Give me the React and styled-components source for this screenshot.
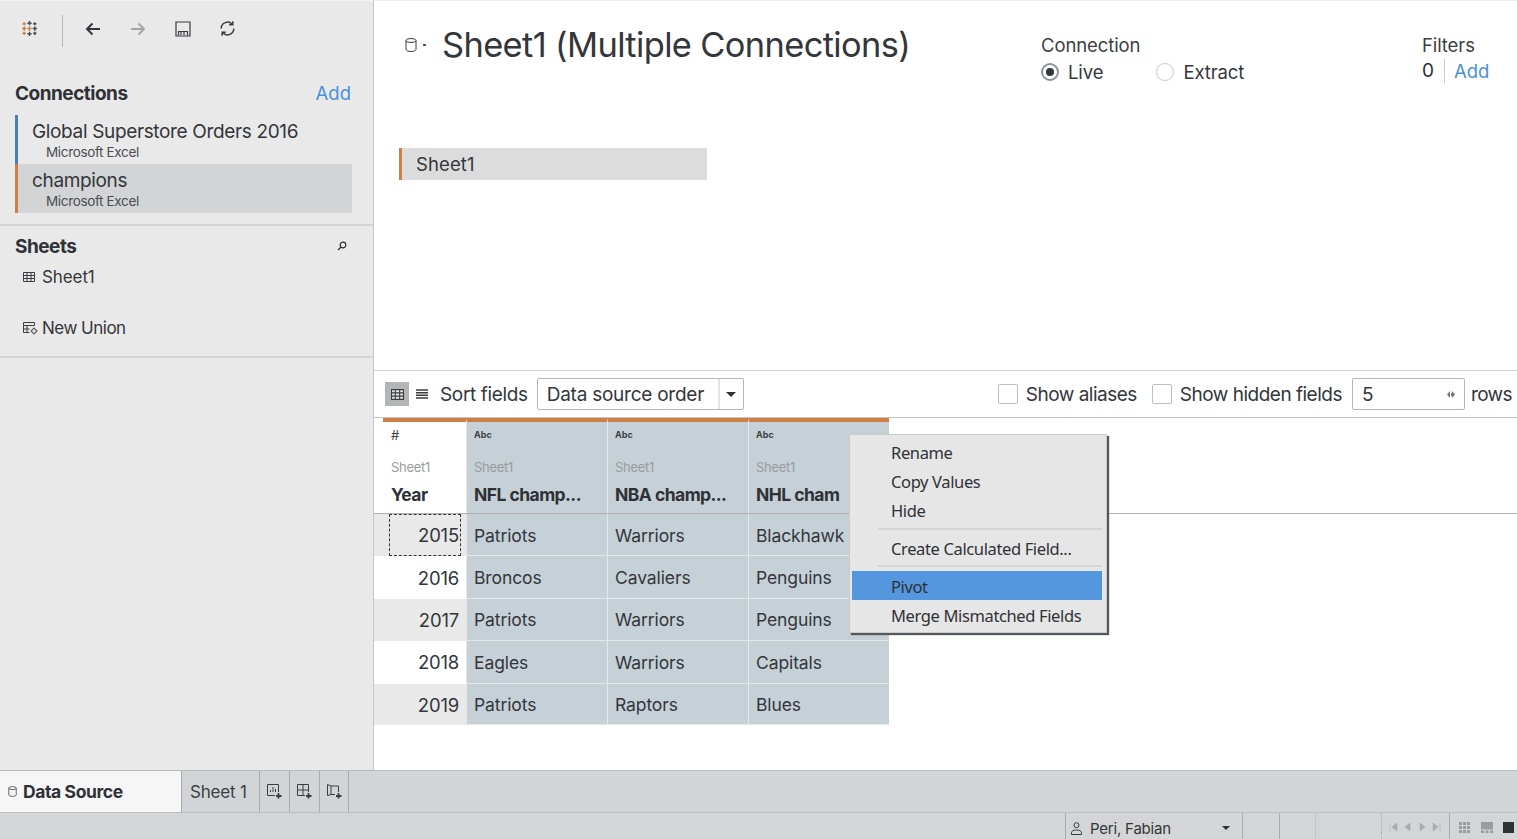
import styled, { createGlobalStyle } from 'styled-components';

const GlobalStyle = createGlobalStyle`
  html, body {
    margin: 0;
    padding: 0;
    background: #fff;
    overflow: hidden;
  }
  * {
    box-sizing: border-box;
  }
  body {
    font-family: 'Inter', 'Liberation Sans', sans-serif;
    color: #2f3136;
  }
`;

const ROWS = [
  ['2015', 'Patriots', 'Warriors', 'Blackhawk'],
  ['2016', 'Broncos', 'Cavaliers', 'Penguins'],
  ['2017', 'Patriots', 'Warriors', 'Penguins'],
  ['2018', 'Eagles', 'Warriors', 'Capitals'],
  ['2019', 'Patriots', 'Raptors', 'Blues'],
];

const COLUMNS = [
  { type: 'Abc', name: 'NFL champ...' },
  { type: 'Abc', name: 'NBA champ...' },
  { type: 'Abc', name: 'NHL cham' },
];

function LogoIcon() {
  const dark = '#4a4f57';
  const orange = '#cf7f45';
  return (
    <svg width="17" height="17" viewBox="0 0 16 16" fill="none" strokeWidth="1.4">
      <path d="M8 1v4M6 3h4" stroke={dark} />
      <path d="M8 11v4M6 13h4" stroke={dark} />
      <path d="M1 8h4M3 6v4" stroke={orange} />
      <path d="M11 8h4M13 6v4" stroke={dark} />
      <path d="M3 2v3M1.5 3.5h3" stroke={orange} />
      <path d="M13 2v3M11.5 3.5h3" stroke={dark} />
      <path d="M3 11v3M1.5 12.5h3" stroke={orange} />
      <path d="M13 11v3M11.5 12.5h3" stroke={dark} />
      <path d="M8 6v4M6 8h4" stroke={orange} />
    </svg>
  );
}

function ArrowIcon({ flip, color }) {
  return (
    <svg width="16" height="14" viewBox="0 0 16 14" fill="none" stroke={color} strokeWidth="2" style={flip ? { transform: 'scaleX(-1)' } : undefined}>
      <path d="M15 7H2M7.5 1.5 2 7l5.5 5.5" />
    </svg>
  );
}

function SaveIcon() {
  return (
    <svg width="16" height="16" viewBox="0 0 16 16" fill="none" stroke="#3a3d42" strokeWidth="1.2">
      <path d="M1 1h14v14H1z" />
      <path d="M3.5 14.5v-4h9v4M6 11v3M9 11v3" />
    </svg>
  );
}

function RefreshIcon() {
  return (
    <svg width="17" height="17" viewBox="0 0 17 17" fill="none" stroke="#3a3d42" strokeWidth="1.5">
      <path d="M2.2 8.5a6.3 6.3 0 0 1 11-4.2" />
      <path d="M14.8 8.5a6.3 6.3 0 0 1-11 4.2" />
      <path d="M13.8 1.2v3.6h-3.6M3.2 15.8v-3.6h3.6" />
    </svg>
  );
}

function SearchIcon() {
  return (
    <svg width="10" height="10" viewBox="0 0 10 10" fill="none" stroke="#2f3136" strokeWidth="1.2">
      <circle cx="6" cy="4" r="2.8" />
      <path d="M4 6 1 9" />
    </svg>
  );
}

function GridIcon({ size = 12 }) {
  return (
    <svg width={size} height={size - 2} viewBox="0 0 12 10" fill="none" stroke="#3a3d42" strokeWidth="1">
      <path d="M.5.5h11v9H.5z" />
      <path d="M.5 3.5h11M.5 6.5h11M4 .5v9M8 .5v9" />
    </svg>
  );
}

function UnionIcon() {
  return (
    <svg width="15" height="13" viewBox="0 0 15 13" fill="none" stroke="#3a3d42" strokeWidth="1">
      <path d="M.5.5h11v3H.5zM.5 3.5v7h6M.5 7h6M4 3.5v7" />
      <circle cx="11" cy="9" r="2.3" />
      <path d="M11 5.5v1.2M11 11.3v1.2M7.5 9h1.2M13.3 9h1.2" />
    </svg>
  );
}

function ListIcon() {
  return (
    <svg width="12" height="10" viewBox="0 0 12 10" fill="none" stroke="#3a3d42" strokeWidth="1.5">
      <path d="M0 1h12M0 3.7h12M0 6.3h12M0 9h12" />
    </svg>
  );
}

function CylinderIcon({ width = 12, height = 14 }) {
  return (
    <svg width={width} height={height} viewBox="0 0 12 14" fill="none" stroke="#3a3d42" strokeWidth="1">
      <ellipse cx="6" cy="2.5" rx="5" ry="2" />
      <path d="M1 2.5v9c0 1.1 2.2 2 5 2s5-.9 5-2v-9" />
    </svg>
  );
}

function NewSheetIcon() {
  return (
    <svg width="15" height="15" viewBox="0 0 15 15" fill="none" stroke="#3a3d42" strokeWidth="1">
      <path d="M8 11.5H.5V.5h11V8" />
      <path d="M3.5 8V6M6 8V3M8.5 8V5" />
      <path d="M11.5 9v5.5M9 12h5.5" strokeWidth="1.8" />
    </svg>
  );
}

function NewDashIcon() {
  return (
    <svg width="15" height="15" viewBox="0 0 15 15" fill="none" stroke="#3a3d42" strokeWidth="1">
      <path d="M8 11.5H.5V.5h11V8M.5 6h11M6 .5v11" />
      <path d="M11.5 9v5.5M9 12h5.5" strokeWidth="1.8" />
    </svg>
  );
}

function NewStoryIcon() {
  return (
    <svg width="15" height="15" viewBox="0 0 15 15" fill="none" stroke="#3a3d42" strokeWidth="1">
      <path d="M.5.5 4 2h7.5v6M4 2v8.5M.5.5v11L4 10.5h4" />
      <path d="M11.5 9v5.5M9 12h5.5" strokeWidth="1.8" />
    </svg>
  );
}

function UserIcon() {
  return (
    <svg width="11" height="13" viewBox="0 0 11 13" fill="none" stroke="#3a3d42" strokeWidth="1">
      <circle cx="5.5" cy="3.2" r="2.5" />
      <path d="M.5 12.5v-2C.5 9 2.5 8 5.5 8s5 1 5 2.5v2z" />
    </svg>
  );
}

function SpinArrowIcon() {
  return (
    <svg width="8" height="7" viewBox="0 0 8 7" fill="#777">
      <path d="M3 0 0 3.5 3 7zM4 2h1V0l3 3.5L5 7V5H4z" />
    </svg>
  );
}

function PagerIcon({ kind }) {
  const paths = {
    first: 'M1 1v8M8 1v8L3 5z',
    prev: 'M7 1v8L2 5z',
    next: 'M2 1v8l5-4z',
    last: 'M1 1v8l5-4zM8 1v8',
  };
  return (
    <svg width="9" height="10" viewBox="0 0 9 10" fill="#a9acae" stroke="#a9acae" strokeWidth="0.6">
      <path d={paths[kind]} />
    </svg>
  );
}

function TileGridIcon() {
  return (
    <svg width="12" height="11" viewBox="0 0 12 11" fill="#9a9d9f">
      {[0, 4, 8].flatMap((y) =>
        [0, 4, 8].map((x) => <rect key={`${x}-${y}`} x={x} y={y} width="3" height="3" />)
      )}
    </svg>
  );
}

function FilmIcon() {
  return (
    <svg width="12" height="11" viewBox="0 0 12 11" fill="#9a9d9f">
      <rect x="0" y="0" width="12" height="7.5" />
      <rect x="0" y="8.5" width="3" height="2.5" />
      <rect x="4.5" y="8.5" width="3" height="2.5" />
      <rect x="9" y="8.5" width="3" height="2.5" />
    </svg>
  );
}

export default function App() {
  return (
    <>
      <GlobalStyle />
      <Page>
        <Main>
          <Sidebar>
            <TopIcons>
              <IconSlot $first>
                <LogoIcon />
              </IconSlot>
              <IconRule />
              <IconSlot><ArrowIcon color="#33363b" /></IconSlot>
              <IconSlot><ArrowIcon flip color="#a3a6a8" /></IconSlot>
              <IconSlot><SaveIcon /></IconSlot>
              <IconSlot><RefreshIcon /></IconSlot>
            </TopIcons>

            <ConnectionsHead>
              <SectionTitle>Connections</SectionTitle>
              <AddLink>Add</AddLink>
            </ConnectionsHead>
            <ConnectionList>
              <ConnectionItem $bar="#4a7fb5">
                <ConnectionName>Global Superstore Orders 2016</ConnectionName>
                <ConnectionType>Microsoft Excel</ConnectionType>
              </ConnectionItem>
              <ConnectionItem $bar="#cf7f45" $active>
                <ConnectionName>champions</ConnectionName>
                <ConnectionType>Microsoft Excel</ConnectionType>
              </ConnectionItem>
            </ConnectionList>

            <SheetsSection>
              <SheetsHead>
                <SectionTitle>Sheets</SectionTitle>
                <SearchIcon />
              </SheetsHead>
              <SheetItem>
                <GridIcon />
                Sheet1
              </SheetItem>
              <UnionItem>
                <UnionIcon />
                New Union
              </UnionItem>
            </SheetsSection>
          </Sidebar>

          <Content>
            <TopPane>
              <HeaderGrid>
                <TitleRow>
                  <CylinderIcon />
                  <TitleCaret />
                  <Title>Sheet1 (Multiple Connections)</Title>
                </TitleRow>
                <div>
                  <GroupLabel>Connection</GroupLabel>
                  <RadioRow>
                    <RadioOption>
                      <Radio $checked />
                      Live
                    </RadioOption>
                    <RadioOption>
                      <Radio />
                      Extract
                    </RadioOption>
                  </RadioRow>
                </div>
                <div>
                  <GroupLabel>Filters</GroupLabel>
                  <FilterRow>
                    <FilterCount>0</FilterCount>
                    <AddLink>Add</AddLink>
                  </FilterRow>
                </div>
              </HeaderGrid>
              <SheetBar>Sheet1</SheetBar>
            </TopPane>

            <GridToolbar>
              <ToolGroup>
                <ViewToggle>
                  <GridIcon size={13} />
                </ViewToggle>
                <ListSlot>
                  <ListIcon />
                </ListSlot>
                <ToolText>Sort fields</ToolText>
                <SortSelect>
                  <SelectValue>Data source order</SelectValue>
                  <SelectCaret>
                    <Caret />
                  </SelectCaret>
                </SortSelect>
              </ToolGroup>
              <ToolGroup>
                <CheckOption>
                  <CheckBox />
                  <CheckText>Show aliases</CheckText>
                </CheckOption>
                <CheckOption>
                  <CheckBox />
                  <CheckText>Show hidden fields</CheckText>
                </CheckOption>
                <RowsInput>
                  5
                  <SpinArrowIcon />
                </RowsInput>
                <RowsLabel>rows</RowsLabel>
              </ToolGroup>
            </GridToolbar>

            <DataGrid>
              <HeadRow>
                <YearHead>
                  <FieldType>#</FieldType>
                  <FieldSource>Sheet1</FieldSource>
                  <FieldName>Year</FieldName>
                </YearHead>
                {COLUMNS.map((col) => (
                  <FieldHead key={col.name}>
                    <FieldType $abc>{col.type}</FieldType>
                    <FieldSource>Sheet1</FieldSource>
                    <FieldName>{col.name}</FieldName>
                  </FieldHead>
                ))}
              </HeadRow>
              {ROWS.map(([year, ...teams], i) => (
                <DataRow key={year}>
                  <YearCell $striped={i % 2 === 0} $focused={i === 0}>
                    {year}
                  </YearCell>
                  {teams.map((team, j) => (
                    <TeamCell key={j}>{team}</TeamCell>
                  ))}
                </DataRow>
              ))}
            </DataGrid>

            <ContextMenu>
              <MenuItem>Rename</MenuItem>
              <MenuItem>Copy Values</MenuItem>
              <MenuItem>Hide</MenuItem>
              <MenuRule />
              <MenuItem>Create Calculated Field...</MenuItem>
              <MenuRule $last />
              <MenuItem $selected>Pivot</MenuItem>
              <MenuItem>Merge Mismatched Fields</MenuItem>
            </ContextMenu>
          </Content>
        </Main>

        <TabBar>
          <DataSourceTab>
            <CylinderIcon width={9} height={11} />
            Data Source
          </DataSourceTab>
          <SheetTab>Sheet 1</SheetTab>
          <NewTab><NewSheetIcon /></NewTab>
          <NewTab><NewDashIcon /></NewTab>
          <NewTab><NewStoryIcon /></NewTab>
        </TabBar>

        <StatusBar>
          <StatusCell $width={177}>
            <UserBox>
              <UserIcon />
              <UserName>Peri, Fabian</UserName>
            </UserBox>
            <SmallCaret />
          </StatusCell>
          <StatusCell $width={37} />
          <StatusCell $width={36} />
          <StatusCell $width={66} $soft />
          <PagerCell>
            <PagerIcon kind="first" />
            <PagerIcon kind="prev" />
            <PagerIcon kind="next" />
            <PagerIcon kind="last" />
          </PagerCell>
          <ViewCell>
            <TileGridIcon />
            <FilmIcon />
            <FullSquare />
          </ViewCell>
        </StatusBar>
      </Page>
    </>
  );
}

const Page = styled.div`
  width: 1517px;
  height: 839px;
  display: flex;
  flex-direction: column;
  overflow: hidden;
`;

const Main = styled.div`
  height: 770px;
  display: flex;
`;

const Sidebar = styled.aside`
  width: 374px;
  flex: none;
  background: #e9e9e9;
  border-right: 1px solid #c4c6c8;
  border-top: 1px solid #f2f2f2;
`;

const TopIcons = styled.div`
  height: 55px;
  display: flex;
  align-items: center;
  padding-left: 7px;
`;

const IconSlot = styled.div`
  width: 45px;
  display: flex;
  justify-content: center;
  margin-right: ${(p) => (p.$first ? '10px' : '0')};
`;

const IconRule = styled.div`
  width: 1px;
  height: 32px;
  margin-top: 4px;
  margin-right: 7px;
  background: #b5b8ba;
`;

const ConnectionsHead = styled.div`
  display: flex;
  justify-content: space-between;
  align-items: center;
  height: 26px;
  margin-top: 24px;
  padding: 0 22px 0 15px;
`;

const SectionTitle = styled.div`
  font-size: 19px;
  font-weight: 700;
  letter-spacing: -0.5px;
  color: #2f3136;
`;

const AddLink = styled.span`
  font-size: 18.5px;
  color: #4a90d9;
`;

const ConnectionList = styled.div`
  margin: 9px 21px 0 15px;
`;

const ConnectionItem = styled.div`
  height: 49px;
  padding: 4px 0 0 14px;
  border-left: 3px solid ${(p) => p.$bar};
  background: ${(p) => (p.$active ? '#d2d4d6' : 'transparent')};
`;

const ConnectionName = styled.div`
  font-size: 19px;
  line-height: 25px;
  letter-spacing: -0.35px;
  color: #33363b;
`;

const ConnectionType = styled.div`
  font-size: 13.5px;
  line-height: 16px;
  margin-left: 14px;
  letter-spacing: -0.35px;
  color: #4a4d52;
`;

const SheetsSection = styled.section`
  margin-top: 11px;
  height: 134px;
  border-top: 2px solid #d2d3d4;
  border-bottom: 2px solid #d2d3d4;
`;

const SheetsHead = styled.div`
  display: flex;
  align-items: center;
  justify-content: space-between;
  height: 26px;
  margin-top: 7px;
  padding: 0 26px 0 15px;
`;

const SheetItem = styled.div`
  display: flex;
  align-items: center;
  gap: 7px;
  height: 24px;
  margin-top: 6px;
  padding-left: 23px;
  font-size: 17px;
  letter-spacing: -0.1px;
  color: #33363b;
`;

const UnionItem = styled(SheetItem)`
  margin-top: 27px;
  gap: 4px;
  letter-spacing: -0.5px;
`;

const Content = styled.main`
  flex: 1;
  position: relative;
  min-width: 0;
  display: flex;
  flex-direction: column;
`;

const TopPane = styled.div`
  height: 371px;
  flex: none;
  border-top: 1px solid #eee;
  border-bottom: 1px solid #cfd0d1;
`;

const HeaderGrid = styled.div`
  display: grid;
  grid-template-columns: 636px 381px 1fr;
  padding: 32px 0 0 31px;
  height: 147px;
`;

const TitleRow = styled.div`
  display: flex;
  align-items: flex-start;
  margin-top: -12px;
  height: 48px;
  & > svg {
    margin-top: 17px;
  }
`;

const TitleCaret = styled.span`
  width: 3px;
  height: 2px;
  margin: 23px 16px 0 6px;
  background: #555;
`;

const Title = styled.h1`
  margin: 0;
  font-size: 34.4px;
  line-height: 48px;
  font-weight: 400;
  letter-spacing: -0.62px;
  color: #33363b;
  white-space: nowrap;
`;

const GroupLabel = styled.div`
  font-size: 18.5px;
  line-height: 24px;
  letter-spacing: -0.1px;
  color: #3b3e43;
`;

const RadioRow = styled.div`
  display: flex;
  gap: 53px;
  margin-top: 3px;
`;

const RadioOption = styled.div`
  display: flex;
  align-items: center;
  gap: 9px;
  font-size: 18.5px;
  line-height: 24px;
  letter-spacing: -0.1px;
  color: #33363b;
`;

const Radio = styled.span`
  width: 18px;
  height: 18px;
  border-radius: 50%;
  border: ${(p) => (p.$checked ? '2px solid #8f9296' : '1px solid #c6c8ca')};
  display: flex;
  align-items: center;
  justify-content: center;
  background: #fff;
  &::after {
    content: '';
    width: 8px;
    height: 8px;
    border-radius: 50%;
    background: ${(p) => (p.$checked ? '#33363b' : 'transparent')};
  }
`;

const FilterRow = styled.div`
  display: flex;
  align-items: center;
  margin-top: 2px;
`;

const FilterCount = styled.span`
  font-size: 19px;
  line-height: 24px;
  padding-right: 10px;
  margin-right: 9px;
  border-right: 1px solid #c8cacc;
`;

const SheetBar = styled.div`
  margin-left: 25px;
  width: 308px;
  height: 32px;
  display: flex;
  align-items: center;
  padding-left: 14px;
  border-left: 3px solid #cf7f45;
  background: #dcdcdc;
  font-size: 18.5px;
  letter-spacing: 0.1px;
  color: #33363b;
`;

const GridToolbar = styled.div`
  height: 47px;
  flex: none;
  display: flex;
  align-items: center;
  justify-content: space-between;
  padding: 0 5px 0 11px;
  border-bottom: 1px solid #c4c5c6;
`;

const ToolGroup = styled.div`
  display: flex;
  align-items: center;
`;

const ViewToggle = styled.div`
  width: 24px;
  height: 24px;
  display: flex;
  align-items: center;
  justify-content: center;
  background: #b3b5b7;
  & > svg {
    background: #e8e8e8;
  }
`;

const ListSlot = styled.div`
  margin: 0 12px 0 7px;
  display: flex;
`;

const ToolText = styled.span`
  font-size: 19px;
  letter-spacing: -0.35px;
  color: #33363b;
  white-space: nowrap;
`;

const CheckText = styled(ToolText)`
  letter-spacing: -0.5px;
`;

const SortSelect = styled.div`
  width: 207px;
  height: 32px;
  margin-left: 9px;
  display: flex;
  align-items: stretch;
  border: 1px solid #b4b6b8;
  border-radius: 2px;
`;

const SelectValue = styled.div`
  flex: 1;
  padding-left: 9px;
  display: flex;
  align-items: center;
  font-size: 19px;
  letter-spacing: -0.25px;
  color: #33363b;
`;

const SelectCaret = styled.div`
  width: 25px;
  border-left: 2px solid #e3e3e3;
  display: flex;
  align-items: center;
  justify-content: center;
`;

const Caret = styled.span`
  width: 0;
  height: 0;
  border-left: 5px solid transparent;
  border-right: 5px solid transparent;
  border-top: 5px solid #2f3136;
`;

const SmallCaret = styled(Caret)`
  border-left-width: 4px;
  border-right-width: 4px;
  border-top-width: 4px;
`;

const CheckOption = styled.div`
  display: flex;
  align-items: center;
  gap: 8px;
  margin-right: 15px;
`;

const CheckBox = styled.span`
  width: 20px;
  height: 20px;
  border: 1px solid #bcbec0;
  border-radius: 2px;
  background: #fff;
`;

const RowsInput = styled.div`
  width: 113px;
  height: 32px;
  margin-left: -5px;
  padding: 0 9px 0 9px;
  display: flex;
  align-items: center;
  justify-content: space-between;
  border: 1px solid #b4b6b8;
  border-radius: 2px;
  font-size: 19px;
  color: #33363b;
`;

const RowsLabel = styled(ToolText)`
  margin-left: 6px;
  letter-spacing: -0.6px;
`;

const DataGrid = styled.div`
  display: flex;
  flex-direction: column;
`;

const HeadRow = styled.div`
  height: 96px;
  display: flex;
  border-bottom: 1px solid #aeb0b2;
`;

const YearHead = styled.div`
  width: 83px;
  margin-left: 9px;
  padding: 4px 0 0 8px;
  border-top: 4px solid #cf7f45;
`;

const FieldHead = styled.div`
  width: 141px;
  padding: 4px 0 0 7px;
  border-top: 4px solid #cf7f45;
  border-left: 1px solid #e4e8ea;
  background: #c6d0d7;
`;

const FieldType = styled.div`
  height: 20px;
  font-size: ${(p) => (p.$abc ? '9px' : '13px')};
  font-weight: ${(p) => (p.$abc ? 700 : 400)};
  line-height: 18px;
  color: #3c4248;
`;

const FieldSource = styled.div`
  margin-top: 12px;
  font-size: 13px;
  line-height: 18px;
  letter-spacing: -0.3px;
  color: #9a9c9e;
`;

const FieldName = styled.div`
  margin-top: 7px;
  font-size: 17.5px;
  line-height: 24px;
  font-weight: 700;
  letter-spacing: -0.55px;
  color: #2f3136;
  white-space: nowrap;
`;

const DataRow = styled.div`
  height: 42.4px;
  display: flex;
  &:last-child {
    height: 41.4px;
  }
  &:last-child > div {
    padding-top: 1px;
  }
`;

const YearCell = styled.div`
  width: 92px;
  position: relative;
  display: flex;
  align-items: center;
  justify-content: flex-end;
  padding-right: 7px;
  font-size: 18.5px;
  letter-spacing: -0.2px;
  color: #33363b;
  background: ${(p) => (p.$striped ? '#e9e9e9' : '#fff')};
  &::before {
    content: '';
    display: ${(p) => (p.$focused ? 'block' : 'none')};
    position: absolute;
    left: 15px;
    right: 5px;
    top: 0;
    bottom: 0;
    border: 1px dashed #333;
  }
`;

const TeamCell = styled.div`
  width: 141px;
  display: flex;
  align-items: center;
  padding-left: 7px;
  font-size: 17.5px;
  letter-spacing: -0.1px;
  color: #33363b;
  background: #c6d0d7;
  border-left: 1px solid #e4e8ea;
  box-shadow: inset 0 -1px 0 #e4e8ea;
`;

const ContextMenu = styled.div`
  position: absolute;
  left: 475px;
  top: 434px;
  width: 258px;
  height: 199px;
  padding: 2px 4px 0 2px;
  background: #e6e6e6;
  border: 1px solid #c9ccce;
  box-shadow: 2px 2px 1px #55585b;
`;

const MenuItem = styled.div`
  height: 29px;
  display: flex;
  align-items: center;
  padding: 2px 0 0 39px;
  font-family: 'Noto Sans', sans-serif;
  font-size: 16.5px;
  letter-spacing: -0.37px;
  color: ${(p) => (p.$selected ? '#2c3036' : '#2f3136')};
  background: ${(p) => (p.$selected ? '#5597de' : 'transparent')};
`;

const MenuRule = styled.div`
  height: 2px;
  margin: ${(p) => (p.$last ? '3px 0 4px 26px' : '4px 0 3px 26px')};
  background: #d2d4d6;
`;

const TabBar = styled.nav`
  height: 43px;
  flex: none;
  display: flex;
  background: #d2d5d7;
  border-top: 1px solid #b9bbbd;
  border-bottom: 1px solid #bcbec0;
`;

const DataSourceTab = styled.div`
  width: 181px;
  display: flex;
  align-items: center;
  gap: 6px;
  padding-left: 8px;
  background: #f6f6f6;
  font-size: 17.5px;
  font-weight: 700;
  letter-spacing: -0.4px;
  color: #2f3136;
`;

const SheetTab = styled.div`
  width: 78px;
  display: flex;
  align-items: center;
  padding-left: 8px;
  border-left: 1px solid #a9abad;
  font-size: 17px;
  letter-spacing: -0.2px;
  color: #3b3e43;
`;

const NewTab = styled.div`
  width: 30px;
  display: flex;
  align-items: center;
  justify-content: center;
  border-left: 1px solid #a9abad;
  &:last-child {
    border-right: 1px solid #a9abad;
  }
`;

const StatusBar = styled.footer`
  height: 26px;
  flex: none;
  display: flex;
  padding-left: 1065px;
  background: #d3d5d6;
`;

const StatusCell = styled.div`
  width: ${(p) => p.$width}px;
  border-left: 1px solid ${(p) => (p.$soft ? '#bcc6cc' : '#a9abad')};
  display: flex;
  align-items: center;
  justify-content: space-between;
  padding: 4px 12px 0 5px;
`;

const UserBox = styled.div`
  display: flex;
  align-items: center;
  gap: 8px;
`;

const UserName = styled.span`
  font-size: 15px;
  letter-spacing: -0.2px;
  color: #33363b;
`;

const PagerCell = styled.div`
  width: 68px;
  border-left: 1px dotted #a9abad;
  display: flex;
  align-items: center;
  justify-content: space-between;
  padding: 2px 8px 0 7px;
`;

const ViewCell = styled.div`
  flex: 1;
  border-left: 1px solid #a9abad;
  display: flex;
  align-items: center;
  gap: 10px;
  padding: 2px 0 0 9px;
`;

const FullSquare = styled.span`
  width: 11px;
  height: 11px;
  background: #2f3136;
`;
